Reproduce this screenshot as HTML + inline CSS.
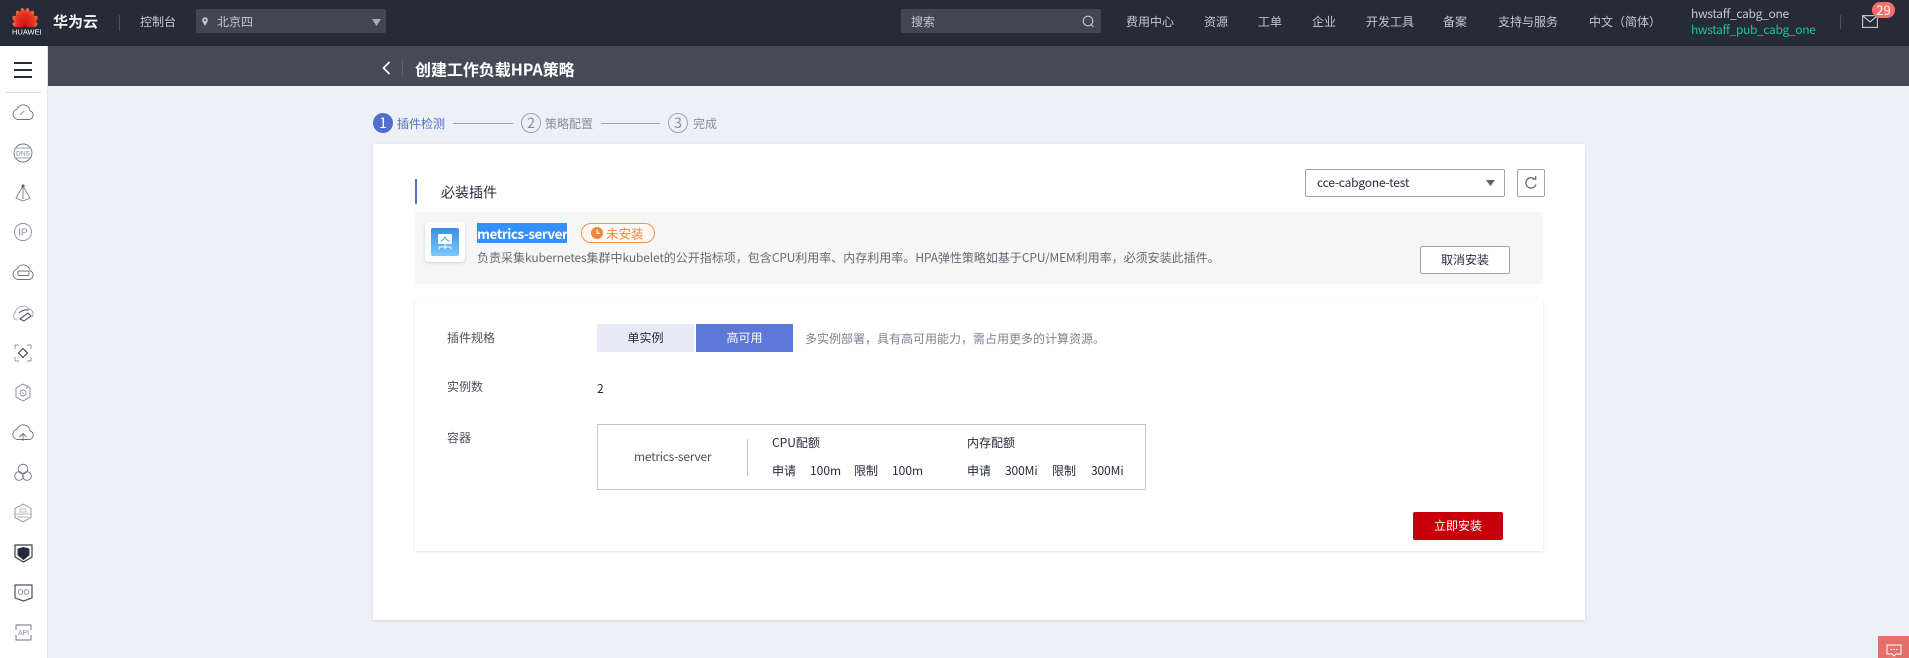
<!DOCTYPE html>
<html lang="zh"><head><meta charset="utf-8"><title>创建工作负载HPA策略</title>
<style>
*{box-sizing:border-box}
html,body{margin:0;padding:0;width:1909px;height:658px;overflow:hidden;background:#edf0f5;font-family:"Noto Sans CJK SC","Liberation Sans",sans-serif;font-size:12px;color:#252b3a}
div,span,svg{position:absolute}
.t{white-space:nowrap;transform:translateY(-50%);line-height:1.2}
.n{color:#c3c6cd}
.b{box-sizing:border-box;border-radius:2px}
.c{text-align:center}
i{font-style:normal;letter-spacing:-.14px}
</style></head><body>
<!-- top bar -->
<div style="left:0;top:0;width:1909px;height:46px;background:#262b38"></div>
<svg style="left:11px;top:4px" width="28" height="23" viewBox="-14 -22 28 23">
<defs><linearGradient id="p" x1="0" y1="1" x2="0" y2="0"><stop offset="0" stop-color="#c9130f"/><stop offset=".7" stop-color="#ea3524"/><stop offset="1" stop-color="#f2813e"/></linearGradient></defs>
<g fill="url(#p)" transform="scale(.85 1.1)">
<path d="M0 0C-3.300-6-3.600-12-2.400-14.500-1.600-16-.9-16.500 0-17 .9-16.500 1.600-16 2.400-14.500 3.600-12 3.300-6 0 0Z" transform="rotate(-12)"/>
<path d="M0 0C-3.300-6-3.600-12-2.400-14.500-1.600-16-.9-16.500 0-17 .9-16.500 1.600-16 2.400-14.500 3.600-12 3.300-6 0 0Z" transform="rotate(12)"/>
<path d="M0 0C-3.300-6-3.600-12-2.400-14.500-1.600-16-.9-16.500 0-17 .9-16.500 1.600-16 2.400-14.500 3.600-12 3.300-6 0 0Z" transform="rotate(-36)"/>
<path d="M0 0C-3.300-6-3.600-12-2.400-14.500-1.600-16-.9-16.500 0-17 .9-16.500 1.600-16 2.400-14.500 3.600-12 3.300-6 0 0Z" transform="rotate(36)"/>
<path d="M0 0C-3.300-6-3.600-12-2.400-14.500-1.600-16-.9-16.500 0-17 .9-16.500 1.600-16 2.400-14.500 3.600-12 3.300-6 0 0Z" transform="rotate(-60)"/>
<path d="M0 0C-3.300-6-3.600-12-2.400-14.500-1.600-16-.9-16.500 0-17 .9-16.500 1.600-16 2.400-14.500 3.600-12 3.300-6 0 0Z" transform="rotate(60)"/>
<path d="M0 0C-3-5-3.300-10-2.200-12.500-1.500-14-.8-14.500 0-15 .8-14.500 1.500-14 2.200-12.500 3.300-10 3-5 0 0Z" transform="rotate(-82)"/>
<path d="M0 0C-3-5-3.300-10-2.200-12.500-1.500-14-.8-14.500 0-15 .8-14.500 1.500-14 2.200-12.500 3.300-10 3-5 0 0Z" transform="rotate(82)"/>
</g></svg>
<span class="t" style="left:12px;top:32px;font:400 7.500px 'Liberation Sans',sans-serif;color:#fff">HUAWEI</span>
<span class="t" style="left:53px;top:22px;font-size:15px;font-weight:700;color:#f2f2f2">华为云</span>
<div style="left:119px;top:15px;width:1px;height:16px;background:#4b505c"></div>
<span class="t n" style="left:140px;top:22px">控制台</span>
<div class="b" style="left:196px;top:9px;width:190px;height:24px;background:#404652"></div>
<svg style="left:202px;top:17px" width="6" height="9" viewBox="0 0 7 10"><path fill-rule="evenodd" d="M3.500 0A3.300 3.300 0 0 1 6.800 3.400C6.800 5.500 3.500 10 3.500 10S.2 5.500.2 3.400A3.300 3.300 0 0 1 3.500 0ZM3.500 2.200a1.200 1.200 0 1 0 .01 0Z" fill="#c3c6cd"/></svg>
<span class="t n" style="left:217px;top:22px">北京四</span>
<svg style="left:372px;top:19px" width="9" height="7"><path d="M0 0h9L4.500 7Z" fill="#a9adb5"/></svg>

<div class="b" style="left:901px;top:9px;width:200px;height:24px;background:#404652"></div>
<span class="t n" style="left:911px;top:22px">搜索</span>
<svg style="left:1082px;top:15px" width="13" height="13" viewBox="0 0 13 13" fill="none" stroke="#c3c6cd" stroke-width="1.100"><circle cx="6" cy="6" r="4.800"/><path d="M9 9.500l2.500 2.500"/></svg>
<span class="t n" style="left:1126px;top:22px">费用中心</span>
<span class="t n" style="left:1204px;top:22px">资源</span>
<span class="t n" style="left:1258px;top:22px">工单</span>
<span class="t n" style="left:1312px;top:22px">企业</span>
<span class="t n" style="left:1366px;top:22px">开发工具</span>
<span class="t n" style="left:1443px;top:22px">备案</span>
<span class="t n" style="left:1498px;top:22px">支持与服务</span>
<span class="t n" style="left:1589px;top:22px">中文（简体）</span>
<span class="t n" style="left:1691px;top:14px;letter-spacing:-.3px">hwstaff_cabg_one</span>
<span class="t" style="left:1691px;top:30px;color:#1fc196;letter-spacing:-.35px">hwstaff_pub_cabg_one</span>
<div style="left:1840px;top:15px;width:1px;height:14px;background:#4b505c"></div>
<svg style="left:1862px;top:15px" width="16" height="13" viewBox="0 0 16 13" fill="none" stroke="#bcc0c8" stroke-width="1.200"><rect x=".6" y=".6" width="14.800" height="11.800"/><path d="M1 1l7 6 7-6"/></svg>
<div class="c" style="left:1872px;top:2px;width:23px;height:16px;border-radius:8px;background:#f66f6a;color:#fff;line-height:16px;font-size:13px">29</div>

<!-- subheader -->
<div style="left:0;top:46px;width:1909px;height:40px;background:#444a56"></div>
<svg style="left:382px;top:61px" width="9" height="14" viewBox="0 0 9 14" fill="none" stroke="#fff" stroke-width="1.600"><path d="M7.500 1L1.500 7l6 6"/></svg>
<div style="left:402px;top:60px;width:1px;height:16px;background:#5d636e"></div>
<span class="t" style="left:415px;top:69px;font-size:16px;font-weight:700;color:#fff;letter-spacing:-.05px">创建工作负载HPA策略</span>

<!-- sidebar -->
<div style="left:0;top:46px;width:48px;height:612px;background:#fff;border-right:1px solid #e3e5ea"></div>
<div style="left:14px;top:62px;width:18px;height:2px;background:#252b3a"></div>
<div style="left:14px;top:69px;width:18px;height:2px;background:#252b3a"></div>
<div style="left:14px;top:76px;width:18px;height:2px;background:#252b3a"></div>
<div style="left:6px;top:92px;width:35px;height:1px;background:#d8dade"></div>
<svg style="left:0;top:96px" width="47" height="560" viewBox="0 96 47 560" fill="none" stroke="#6b7180" stroke-width=".9">
<path d="M17.500 119.500h11a4.500 4.500 0 0 0 1.500-8.800 6.800 6.800 0 0 0-13-1.700 5.400 5.400 0 0 0 .5 10.500Z"/><path d="M20 115l4-4" stroke="#8a8f9b"/>
<circle cx="23" cy="153" r="9"/><path d="M15.500 148h15M15.500 158h15" stroke="#9a9fa9"/><text x="23" y="155.500" font-size="6.500" text-anchor="middle" fill="#80858f" stroke="none" font-family="Liberation Sans">DNS</text>
<path d="M23 186v13M23 186l-7 12 7 3 7-3Z" stroke="#7a808c"/><circle cx="23" cy="186" r="1.200" fill="#5b6170"/>
<circle cx="23" cy="232" r="8.500" stroke="#8a8f9b"/><text x="23" y="235.500" font-size="10" text-anchor="middle" fill="#8a8f9b" stroke="none" font-family="Liberation Sans">IP</text>
<path d="M17.500 279.500h11a4.500 4.500 0 0 0 1.500-8.800 6.800 6.800 0 0 0-13-1.700 5.400 5.400 0 0 0 .5 10.500Z"/><rect x="18" y="271" width="11" height="4.500" rx="1"/>
<path d="M17 320a4 4 0 0 1-2-7 8 8 0 0 1 14-4 5 5 0 0 1 3 8" stroke="#9a9fa9"/><path d="M20 319l8-6 3 3-7 5ZM19 313q4-4 10-3" stroke="#545a69" stroke-width="1.100"/>
<path d="M15 345h4M27 345h4M15 361h4M27 361h4M15 345v4M15 357v4M31 345v4M31 357v4" stroke="#8a8f9b"/><path d="M23 348.500l4.500 4.500-4.500 4.500-4.500-4.500Z" stroke="#3a4050" stroke-width="1.100"/>
<path d="M23 384l7 4v9l-7 4-7-4v-9Z" stroke="#80858f"/><circle cx="23" cy="393" r="3" stroke="#8a8f9b"/><circle cx="23" cy="393" r=".8" fill="#8a8f9b" stroke="none"/><path d="M26 389l2.500-3.500" stroke="#8a8f9b"/>
<path d="M17 439.500h12a4.500 4.500 0 0 0 1-8.800 6.800 6.800 0 0 0-13-1.700 5.400 5.400 0 0 0 0 10.500Z"/><path d="M23 441v-7M19.500 437l3.500-3.500 3.500 3.500" stroke="#6a7080"/>
<circle cx="23" cy="469" r="4.800" stroke="#6a7080"/><circle cx="19" cy="476" r="4.300" stroke="#6a7080"/><circle cx="27" cy="476" r="4.300" stroke="#6a7080"/>
<path d="M23 504l8 4.500v9l-8 4.500-8-4.500v-9Z" stroke="#8a8f9b"/><path d="M14 514h18M17 517h12" stroke="#b5b8bf"/><rect x="20" y="509" width="6" height="3" stroke="#b5b8bf"/>
<path d="M15 545h17v12l-8.500 5-8.500-5Z" stroke="#3a4050" stroke-width="1.200"/><path d="M18 549l5.500-1.500L29 549v6l-5.500 4.500-5.500-4.500Z" fill="#252b3a" stroke="#252b3a"/>
<path d="M15 585h17v13l-8.500 3-8.500-3Z" stroke="#4a5060" stroke-width="1.200"/><circle cx="20.500" cy="592" r="2.300" stroke="#80858f"/><circle cx="26.500" cy="592" r="2.300" stroke="#80858f"/>
<path d="M16 630v-5h15v5M31 635v5H16v-5" stroke="#6b7180"/><text x="23.500" y="635" font-size="7" text-anchor="middle" fill="#8a8f9b" stroke="none" font-family="Liberation Sans">API</text>
</svg>

<!-- steps -->
<div class="c" style="left:373px;top:113px;width:20px;height:20px;border-radius:50%;background:#526ecc;color:#fff;font-size:14px;line-height:20px">1</div>
<span class="t" style="left:397px;top:124px;color:#526ecc">插件检测</span>
<div style="left:453px;top:123px;width:60px;height:1px;background:#a0a3ab"></div>
<div class="c" style="left:521px;top:113px;width:20px;height:20px;border-radius:50%;border:1px solid #a0a3ab;color:#888d97;font-size:14px;line-height:18px">2</div>
<span class="t" style="left:545px;top:124px;color:#888d97">策略配置</span>
<div style="left:601px;top:123px;width:59px;height:1px;background:#a0a3ab"></div>
<div class="c" style="left:668px;top:113px;width:20px;height:20px;border-radius:50%;border:1px solid #a0a3ab;color:#888d97;font-size:14px;line-height:18px">3</div>
<span class="t" style="left:693px;top:124px;color:#888d97">完成</span>

<!-- main card -->
<div style="left:373px;top:144px;width:1212px;height:476px;background:#fff;box-shadow:0 1px 3px rgba(0,0,0,.12)"></div>
<div style="left:415px;top:179px;width:2px;height:25px;background:#526ecc"></div>
<span class="t" style="left:441px;top:193px;font-size:14px;color:#252b3a">必装插件</span>
<div class="b" style="left:1305px;top:169px;width:200px;height:28px;background:#fff;border:1px solid #9fa3ad"></div>
<span class="t" style="left:1317px;top:183px;font-size:12px;color:#252b3a;letter-spacing:-.2px">cce-cabgone-test</span>
<svg style="left:1486px;top:180px" width="9" height="6"><path d="M0 0h9L4.500 6Z" fill="#5b6170"/></svg>
<div class="b" style="left:1517px;top:169px;width:28px;height:28px;background:#fff;border:1px solid #9fa3ad"></div>
<svg style="left:1524px;top:176px" width="14" height="14" viewBox="0 0 14 14" fill="none" stroke="#5b6170" stroke-width="1.200"><path d="M12 8.500A5.200 5.200 0 1 1 10.500 3"/><path d="M8.500 3.200h3.200V0"/></svg>

<div style="left:415px;top:212px;width:1128px;height:72px;background:#f6f6f6"></div>
<div style="left:425px;top:222px;width:40px;height:40px;background:#fff;border-radius:4px;box-shadow:0 1px 3px rgba(0,0,0,.15)"></div>
<div style="left:431px;top:228px;width:28px;height:28px;border-radius:2px;background:linear-gradient(180deg,#3a8fe2,#7cc8fa)"></div>
<svg style="left:436px;top:233px" width="18" height="18" viewBox="0 0 18 18"><rect x="2" y="1" width="14" height="10" rx="1" fill="#fff"/><path d="M4.500 8.500l3-2 1.500-2.500 1.500 2.500 3 2" fill="none" stroke="#4aa0ea"/><path d="M9 11v3M3 14h12M3 14v2.500M9 14v2.500M15 14v2.500" stroke="#fff" fill="none"/></svg>
<div style="left:477px;top:223px;width:90px;height:20px;background:#3390ff"></div>
<span class="t" style="left:477px;top:233px;font-size:13.500px;font-weight:700;color:#fff;letter-spacing:-.5px">metrics-server</span>
<div style="left:581px;top:223px;width:74px;height:20px;border:1px solid #f4924a;border-radius:10px;background:#fdf8f3"></div>
<svg style="left:591px;top:227px" width="12" height="12" viewBox="0 0 12 12"><path fill-rule="evenodd" d="M6 0a6 6 0 1 0 .01 0ZM5.500 2.500h1.200v3.300H9.200V7H5.500Z" fill="#f0863c"/></svg>
<span class="t" style="left:606px;top:233px;color:#f0863c;font-size:12.500px">未安装</span>
<span class="t" style="left:477px;top:258px;color:#666b75">负责采集<i>kubernetes</i>集群中<i>kubelet</i>的公开指标项，包含<i>CPU</i>利用率、内存利用率。<i>HPA</i>弹性策略如基于<i>CPU/MEM</i>利用率，必须安装此插件。</span>
<div class="b c" style="left:1420px;top:246px;width:90px;height:28px;background:#fff;border:1px solid #9fa3ad;line-height:26px;color:#252b3a">取消安装</div>

<!-- inner card -->
<div style="left:415px;top:300px;width:1128px;height:251px;background:#fff;box-shadow:0 1px 3px rgba(0,0,0,.12)"></div>
<span class="t" style="left:447px;top:338px;color:#4b505c">插件规格</span>
<div class="c" style="left:597px;top:324px;width:97px;height:28px;background:#e8ebf7;line-height:28px;color:#252b3a">单实例</div>
<div class="c" style="left:696px;top:324px;width:97px;height:28px;background:#5d78d6;line-height:28px;color:#fff">高可用</div>
<span class="t" style="left:805px;top:339px;color:#7e838e">多实例部署，具有高可用能力，需占用更多的计算资源。</span>
<span class="t" style="left:447px;top:387px;color:#4b505c">实例数</span>
<span class="t" style="left:597px;top:389px;color:#252b3a">2</span>
<span class="t" style="left:447px;top:438px;color:#4b505c">容器</span>
<div style="left:597px;top:424px;width:549px;height:66px;border:1px solid #c4c6cb"></div>
<div style="left:747px;top:439px;width:1px;height:37px;background:#c4c6cb"></div>
<span class="t" style="left:634px;top:457px;color:#4b505c;letter-spacing:-.26px">metrics-server</span>
<span class="t" style="left:772px;top:443px">CPU配额</span>
<span class="t" style="left:772px;top:471px">申请</span>
<span class="t" style="left:810px;top:471px">100m</span>
<span class="t" style="left:854px;top:471px">限制</span>
<span class="t" style="left:892px;top:471px">100m</span>
<span class="t" style="left:967px;top:443px">内存配额</span>
<span class="t" style="left:967px;top:471px">申请</span>
<span class="t" style="left:1005px;top:471px;letter-spacing:-.1px">300Mi</span>
<span class="t" style="left:1052px;top:471px">限制</span>
<span class="t" style="left:1091px;top:471px;letter-spacing:-.1px">300Mi</span>
<div class="b c" style="left:1413px;top:512px;width:90px;height:28px;background:#c7000b;color:#fff;line-height:28px">立即安装</div>

<!-- feedback -->
<div style="left:1878px;top:636px;width:31px;height:22px;background:#e2716b"></div>
<svg style="left:1886px;top:644px" width="16" height="14" viewBox="0 0 16 14" fill="none" stroke="#fff"><path d="M1 1h14v9h-5l-2 2-2-2H1Z"/><path d="M4.500 5.500h1.500M7.300 5.500h1.500M10 5.500h1.500"/></svg>
</body></html>
